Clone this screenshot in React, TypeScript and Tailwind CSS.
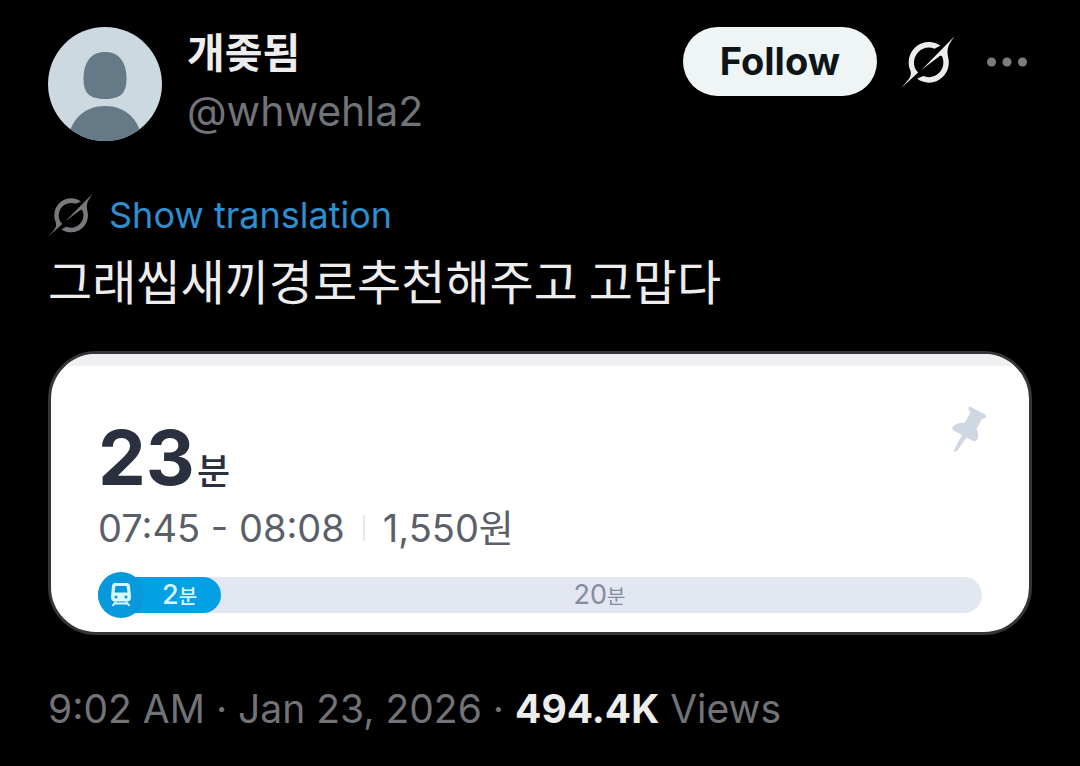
import { clsx } from 'clsx';

const GROK_PATH =
  'M12.745 20.54l10.97-8.19c.539-.4 1.307-.244 1.564.38 1.349 3.288.746 7.241-1.938 9.955-2.683 2.714-6.417 3.31-9.83 1.954l-3.728 1.745c5.347 3.697 11.84 2.782 15.898-1.324 3.219-3.255 4.216-7.692 3.284-11.693l.008.009c-1.351-5.878.332-8.227 3.782-13.031L33 0l-4.54 4.59v-.014L12.743 20.544m-2.263 1.987c-3.837-3.707-3.175-9.446.1-12.755 2.42-2.449 6.388-3.448 9.852-1.979l3.72-1.737c-.67-.49-1.53-1.017-2.515-1.387-4.455-1.854-9.789-.931-13.41 2.728-3.483 3.523-4.579 8.94-2.697 13.561 1.405 3.454-.899 5.898-3.22 8.364C1.49 30.2.666 31.074 0 32l10.478-9.466';

function GrokIcon({ className }: { className?: string }) {
  return (
    <svg viewBox="0 0 33 32" fill="currentColor" aria-hidden="true" className={clsx('shrink-0', className)}>
      <path d={GROK_PATH} />
    </svg>
  );
}

function Avatar() {
  return (
    <svg viewBox="0 0 114 114" aria-hidden="true" className="size-[114px] shrink-0 rounded-full">
      <rect width="114" height="114" fill="#ccd9e1" />
      <path
        d="M57 25c14 0 21.500 10 21.500 27 0 14-6 20-21.500 20s-21.500-6-21.500-20c0-17 7.500-27 21.500-27z"
        fill="#657987"
      />
      <path d="M20 114c2-22 17-35 37-35s35 13 37 35z" fill="#657987" />
    </svg>
  );
}

function PinIcon() {
  return (
    <svg viewBox="20 15 38 50" fill="#ced7e2" aria-hidden="true" className="h-[50px] w-[38px]">
      <path d="M40 16.500L55 24.500Q57 26 55.500 28L52 29L46.500 39Q49.500 44 47 50Q45 52 43 51L36.500 47.500L27 61Q25 62.500 24 60L32 45L23.500 40.500Q21 38.500 23 36.500Q28 32 34.500 33L40.500 22.500L38.500 19.500Q38 17 40 16.500Z" />
    </svg>
  );
}

function TrainIcon() {
  return (
    <svg viewBox="0 0 20 24" aria-hidden="true" className="h-6 w-5">
      <path d="M5 18.500L1.500 23M15 18.500L18.500 23M4 20.500H16" stroke="#d8f8ff" strokeWidth="2" />
      <path
        fillRule="evenodd"
        fill="#d8f8ff"
        d="M4 0H16Q18.500 0 19 3L20 14Q20 18.500 16 18.500H4Q0 18.500 0 14L1 3Q1.500 0 4 0ZM4.500 3L3.500 9.500H16.500L15.500 3ZM5 12.500a1.500 1.500 0 1 0 .01 0ZM15 12.500a1.500 1.500 0 1 0 .01 0Z"
      />
    </svg>
  );
}

function PostHeader() {
  return (
    <header className="flex items-start">
      <Avatar />
      <div className="ml-[25px] min-w-0 flex-1">
        <h1 className="text-[41px] leading-[52px] font-bold text-[#ededed]">개좆됨</h1>
        <p className="text-[41px] leading-[64px] text-[#717376]">@whwehla2</p>
      </div>
      <div className="mr-[5px] flex h-[69px] items-center">
        <button
          type="button"
          className="h-full rounded-full bg-[#eff4f5] px-[37px] text-[38px] font-bold text-[#0f1419]"
        >
          Follow
        </button>
        <button type="button" aria-label="Grok" className="ml-6 text-[#ededed]">
          <GrokIcon className="h-[52px] w-[54px]" />
        </button>
        <button type="button" aria-label="More" className="ml-8 text-[#7c7c7f]">
          <svg viewBox="0 0 40 10" fill="currentColor" aria-hidden="true" className="h-[10px] w-10">
            <circle cx="4.500" cy="5" r="4.500" />
            <circle cx="20" cy="5" r="4.500" />
            <circle cx="35.500" cy="5" r="4.500" />
          </svg>
        </button>
      </div>
    </header>
  );
}

function RouteCard() {
  return (
    <section className="mt-9 overflow-hidden rounded-[48px] border-3 border-[#333536] bg-white">
      <div className="h-3 bg-[#f0f0f3]" />
      <div className="px-[47px] pb-[14px]">
        <div className="flex items-start justify-between">
          <p className="mt-[51px] flex h-[83px] items-baseline gap-0.5 text-[#2b303e]">
            <span className="text-[76px] leading-[80px] font-bold">23</span>
            <span className="text-[36px] leading-none font-medium">분</span>
          </p>
          <button type="button" aria-label="Pin route" className="mt-[39px] mr-[-6px]">
            <PinIcon />
          </button>
        </div>
        <div className="flex h-[56px] items-center text-[38px] text-[#5a5f69]">
          <span>07:45 - 08:08</span>
          <span className="mx-[18px] h-[26px] w-[2px] bg-[#e6e8ec]" />
          <span>1,550원</span>
        </div>
        <div className="mt-4 flex h-[46px] items-center text-[27px]">
          <div className="flex h-9 flex-1 items-center rounded-full bg-[#e2e7f1]">
            <div className="flex h-9 w-[123px] items-center rounded-full bg-[#03a0e3] text-[#d8f8ff]">
              <span className="flex size-[46px] shrink-0 items-center justify-center rounded-full bg-[#0799dc]">
                <TrainIcon />
              </span>
              <span className="ml-[18px] font-medium">
                2<span className="text-[20px]">분</span>
              </span>
            </div>
            <span className="flex-1 pr-1 text-center text-[#858c9b]">
              20<span className="text-[20px]">분</span>
            </span>
          </div>
        </div>
      </div>
    </section>
  );
}

export default function App() {
  return (
    <main className="min-h-screen bg-black px-12 pt-[27px] pb-7 font-['Inter','Noto_Sans_CJK_KR',sans-serif]">
      <article>
        <PostHeader />
        <div className="mt-11 flex items-center gap-4">
          <GrokIcon className="h-11 w-[45px] text-[#77797c]" />
          <a href="#translation" className="text-[36px] leading-[56px] text-[#2b8fd0]">
            Show translation
          </a>
        </div>
        <p className="font-['Noto_Sans_CJK_KR',sans-serif] text-[48px] leading-[72px] text-[#ededed]">
          그래씹새끼경로추천해주고 고맙다
        </p>
        <RouteCard />
        <footer className="mt-[46px] text-[39px] leading-[56px] text-[#717376]">
          <time dateTime="2026-01-23T09:02">9:02 AM · Jan 23, 2026</time> ·{' '}
          <strong className="text-[#ededed]">494.4K</strong> Views
        </footer>
      </article>
    </main>
  );
}
